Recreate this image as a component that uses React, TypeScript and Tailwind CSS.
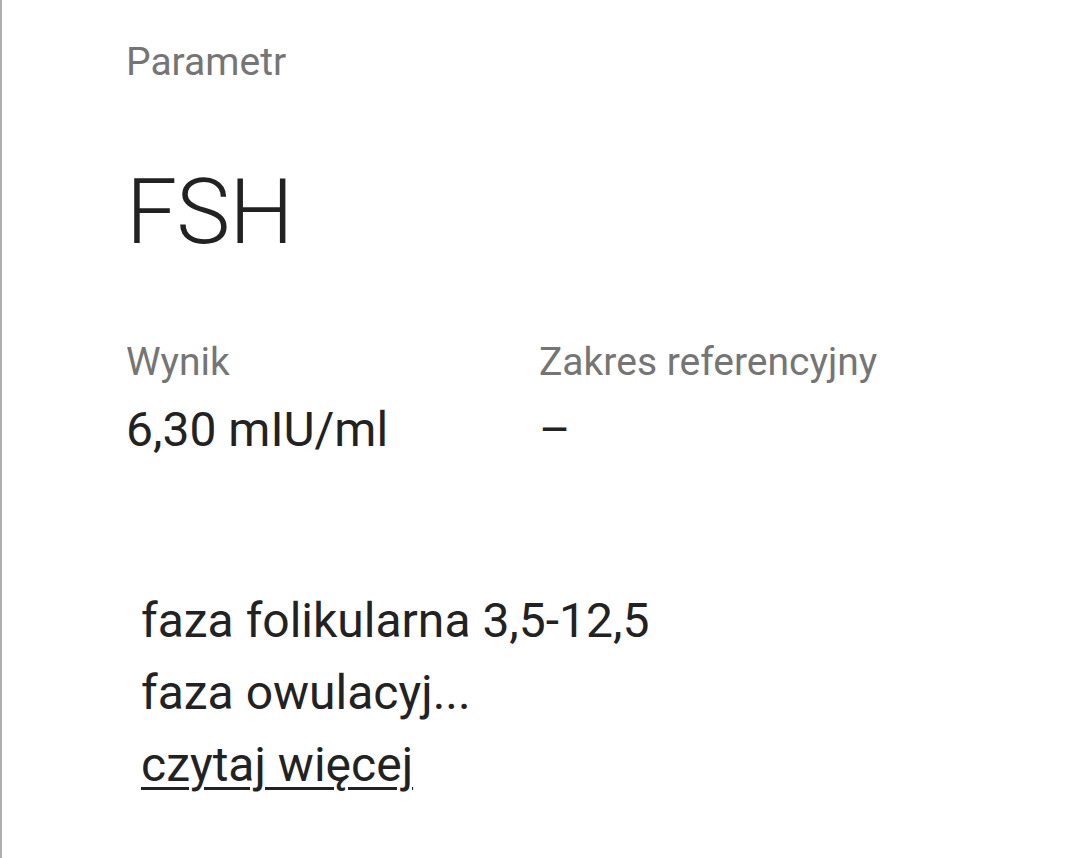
import React from "react";

export default function App() {
  return (
    <div
      className="w-[1080px] h-[858px] bg-white border-l-2 border-[#b0b0b0] overflow-hidden"
      style={{ fontFamily: "Roboto, 'Noto Sans', sans-serif" }}
    >
      <div className="pl-[124px] pt-[38px] flex flex-col">
        <div className="text-[39px] leading-[48px] text-[#757575]">Parametr</div>
        <div className="mt-[80px] text-[91px] leading-[92px] font-light text-[#222222] tracking-[-1px]">FSH</div>
        <div className="mt-[80px] flex">
          <div className="w-[413px] flex flex-col">
            <div className="text-[39px] leading-[48px] text-[#757575]">Wynik</div>
            <div className="mt-[18px] text-[48px] leading-[52px] text-[#222222]">6,30 mIU/ml</div>
          </div>
          <div className="flex flex-col">
            <div className="text-[39px] leading-[48px] text-[#757575]">Zakres referencyjny</div>
            <div className="mt-[18px] text-[48px] leading-[52px] text-[#222222]">–</div>
          </div>
        </div>
        <div className="mt-[129px] pl-[15px] flex flex-col text-[48px] leading-[72px] text-[#222222]">
          <div>faza folikularna 3,5-12,5</div>
          <div>faza owulacyj...</div>
          <div className="underline decoration-[3px] underline-offset-[6px]">czytaj więcej</div>
        </div>
      </div>
    </div>
  );
}
